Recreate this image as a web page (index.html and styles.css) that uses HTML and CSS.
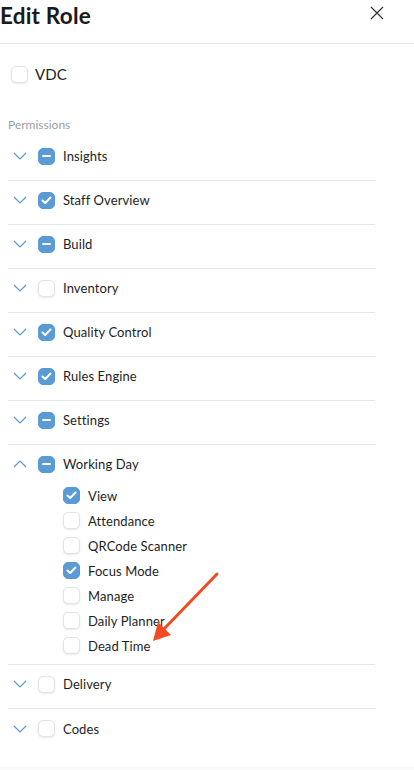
FILE: index.html
```html
<!DOCTYPE html>
<html>
<head>
<meta charset="utf-8">
<link rel="stylesheet" href="styles.css">
</head>
<body>
<div class="page">
  <header class="header">
    <h1 class="title">Edit Role</h1>
    <button class="close" aria-label="Close">
      <svg width="14" height="14" viewBox="0 0 14 14"><path d="M1 1L13 13M13 1L1 13" stroke="#333" stroke-width="1.2" fill="none"/></svg>
    </button>
  </header>

  <div class="vdc">
    <span class="cb"></span><span class="label">VDC</span>
  </div>

  <div class="section-label">Permissions</div>

  <div class="list">
    <div class="row"><span class="chev"><svg width="14" height="8" viewBox="0 0 14 8"><path d="M1 1L7 7L13 1" stroke="#5b9bd5" stroke-width="1.2" fill="none"/></svg></span><span class="cb partial"></span><span class="label">Insights</span></div>
    <div class="row"><span class="chev"><svg width="14" height="8" viewBox="0 0 14 8"><path d="M1 1L7 7L13 1" stroke="#5b9bd5" stroke-width="1.2" fill="none"/></svg></span><span class="cb checked"><svg width="11" height="9" viewBox="0 0 11 9"><path d="M1.5 4.5L4.2 7L9.5 1.5" stroke="#fff" stroke-width="2" fill="none" stroke-linecap="round" stroke-linejoin="round"/></svg></span><span class="label">Staff Overview</span></div>
    <div class="row"><span class="chev"><svg width="14" height="8" viewBox="0 0 14 8"><path d="M1 1L7 7L13 1" stroke="#5b9bd5" stroke-width="1.2" fill="none"/></svg></span><span class="cb partial"></span><span class="label">Build</span></div>
    <div class="row"><span class="chev"><svg width="14" height="8" viewBox="0 0 14 8"><path d="M1 1L7 7L13 1" stroke="#5b9bd5" stroke-width="1.2" fill="none"/></svg></span><span class="cb"></span><span class="label">Inventory</span></div>
    <div class="row"><span class="chev"><svg width="14" height="8" viewBox="0 0 14 8"><path d="M1 1L7 7L13 1" stroke="#5b9bd5" stroke-width="1.2" fill="none"/></svg></span><span class="cb checked"><svg width="11" height="9" viewBox="0 0 11 9"><path d="M1.5 4.5L4.2 7L9.5 1.5" stroke="#fff" stroke-width="2" fill="none" stroke-linecap="round" stroke-linejoin="round"/></svg></span><span class="label">Quality Control</span></div>
    <div class="row"><span class="chev"><svg width="14" height="8" viewBox="0 0 14 8"><path d="M1 1L7 7L13 1" stroke="#5b9bd5" stroke-width="1.2" fill="none"/></svg></span><span class="cb checked"><svg width="11" height="9" viewBox="0 0 11 9"><path d="M1.5 4.5L4.2 7L9.5 1.5" stroke="#fff" stroke-width="2" fill="none" stroke-linecap="round" stroke-linejoin="round"/></svg></span><span class="label">Rules Engine</span></div>
    <div class="row"><span class="chev"><svg width="14" height="8" viewBox="0 0 14 8"><path d="M1 1L7 7L13 1" stroke="#5b9bd5" stroke-width="1.2" fill="none"/></svg></span><span class="cb partial"></span><span class="label">Settings</span></div>
    <div class="group">
      <div class="row head"><span class="chev"><svg width="14" height="8" viewBox="0 0 14 8"><path d="M1 7L7 1L13 7" stroke="#5b9bd5" stroke-width="1.2" fill="none"/></svg></span><span class="cb partial"></span><span class="label">Working Day</span></div>
      <div class="subs">
        <div class="sub"><span class="cb checked"><svg width="11" height="9" viewBox="0 0 11 9"><path d="M1.5 4.5L4.2 7L9.5 1.5" stroke="#fff" stroke-width="2" fill="none" stroke-linecap="round" stroke-linejoin="round"/></svg></span><span class="label">View</span></div>
        <div class="sub"><span class="cb"></span><span class="label">Attendance</span></div>
        <div class="sub"><span class="cb"></span><span class="label">QRCode Scanner</span></div>
        <div class="sub"><span class="cb checked"><svg width="11" height="9" viewBox="0 0 11 9"><path d="M1.5 4.5L4.2 7L9.5 1.5" stroke="#fff" stroke-width="2" fill="none" stroke-linecap="round" stroke-linejoin="round"/></svg></span><span class="label">Focus Mode</span></div>
        <div class="sub"><span class="cb"></span><span class="label">Manage</span></div>
        <div class="sub"><span class="cb"></span><span class="label">Daily Planner</span></div>
        <div class="sub"><span class="cb"></span><span class="label">Dead Time</span></div>
      </div>
    </div>
    <div class="row"><span class="chev"><svg width="14" height="8" viewBox="0 0 14 8"><path d="M1 1L7 7L13 1" stroke="#5b9bd5" stroke-width="1.2" fill="none"/></svg></span><span class="cb"></span><span class="label">Delivery</span></div>
    <div class="row last"><span class="chev"><svg width="14" height="8" viewBox="0 0 14 8"><path d="M1 1L7 7L13 1" stroke="#5b9bd5" stroke-width="1.2" fill="none"/></svg></span><span class="cb"></span><span class="label">Codes</span></div>
  </div>

  <div class="footer"></div>

  <svg class="arrow" width="414" height="770" viewBox="0 0 414 770">
    <path d="M217 574L162 631" stroke="#f24a24" stroke-width="3" stroke-linecap="round" fill="none"/>
    <path d="M153 641L158 622L171 635Z" fill="#f24a24"/>
  </svg>
</div>
</body>
</html>
```

FILE: styles.css
```css
* { box-sizing: border-box; }
html, body { margin: 0; padding: 0; background: #fff; }
body {
  font-family: Lato, "Noto Sans", sans-serif;
  color: #1e1e1e;
  width: 414px;
  height: 770px;
  overflow: hidden;
}
.page { position: relative; height: 770px; }
.header {
  height: 44px;
  border-bottom: 1px solid #e6e6e6;
  display: flex;
  justify-content: space-between;
  align-items: flex-start;
}
.title {
  margin: 0;
  font-size: 22.5px;
  font-weight: 700;
  line-height: 32px;
  color: #1a1a1a;
  letter-spacing: 0.2px;
}
.close {
  border: 0;
  background: none;
  padding: 0;
  margin: 6px 30px 0 0;
  width: 14px;
  height: 14px;
  display: flex;
}
.vdc {
  display: flex;
  align-items: center;
  height: 18px;
  margin: 21px 0 0 11px;
}
.vdc .label { margin-left: 7px; font-size: 15px; }
.section-label {
  margin: 34px 0 0 8px;
  font-size: 12px;
  color: #9aa0a8;
  line-height: 16px;
}
.list { margin: 0 39px 0 8px; padding-top: 4px; }
.row {
  height: 44px;
  border-bottom: 1px solid #e6e6e6;
  display: flex;
  align-items: center;
  padding-bottom: 5px;
}
.row.last { border-bottom: 0; }
.group { border-bottom: 1px solid #e6e6e6; padding-bottom: 6px; }
.group .row.head { border-bottom: 0; height: 38px; padding-bottom: 0; }
.chev { width: 14px; margin-left: 5px; display: flex; }
.cb {
  width: 17px;
  height: 17px;
  border-radius: 5px;
  border: 1px solid #e1e3e8;
  background: #fff;
  box-shadow: 0 1px 2px rgba(0,0,0,0.09);
  display: flex;
  align-items: center;
  justify-content: center;
  flex: none;
}
.row .cb { margin-left: 11px; }
.cb.checked, .cb.partial {
  background: #5b9bd5;
  border-color: #5b9bd5;
  box-shadow: none;
}
.cb.partial::after {
  content: "";
  width: 9px;
  height: 2px;
  border-radius: 1px;
  background: #fff;
}
.label { font-size: 13px; margin-left: 8px; color: #1e1e1e; letter-spacing: 0.1px; }
.subs { padding-left: 55px; }
.sub { height: 25px; display: flex; align-items: center; }
.footer {
  position: absolute;
  left: 0; right: 0; bottom: 0;
  height: 3px;
  background: #f9f9f9;
}
.arrow { position: absolute; left: 0; top: 0; pointer-events: none; }
```
